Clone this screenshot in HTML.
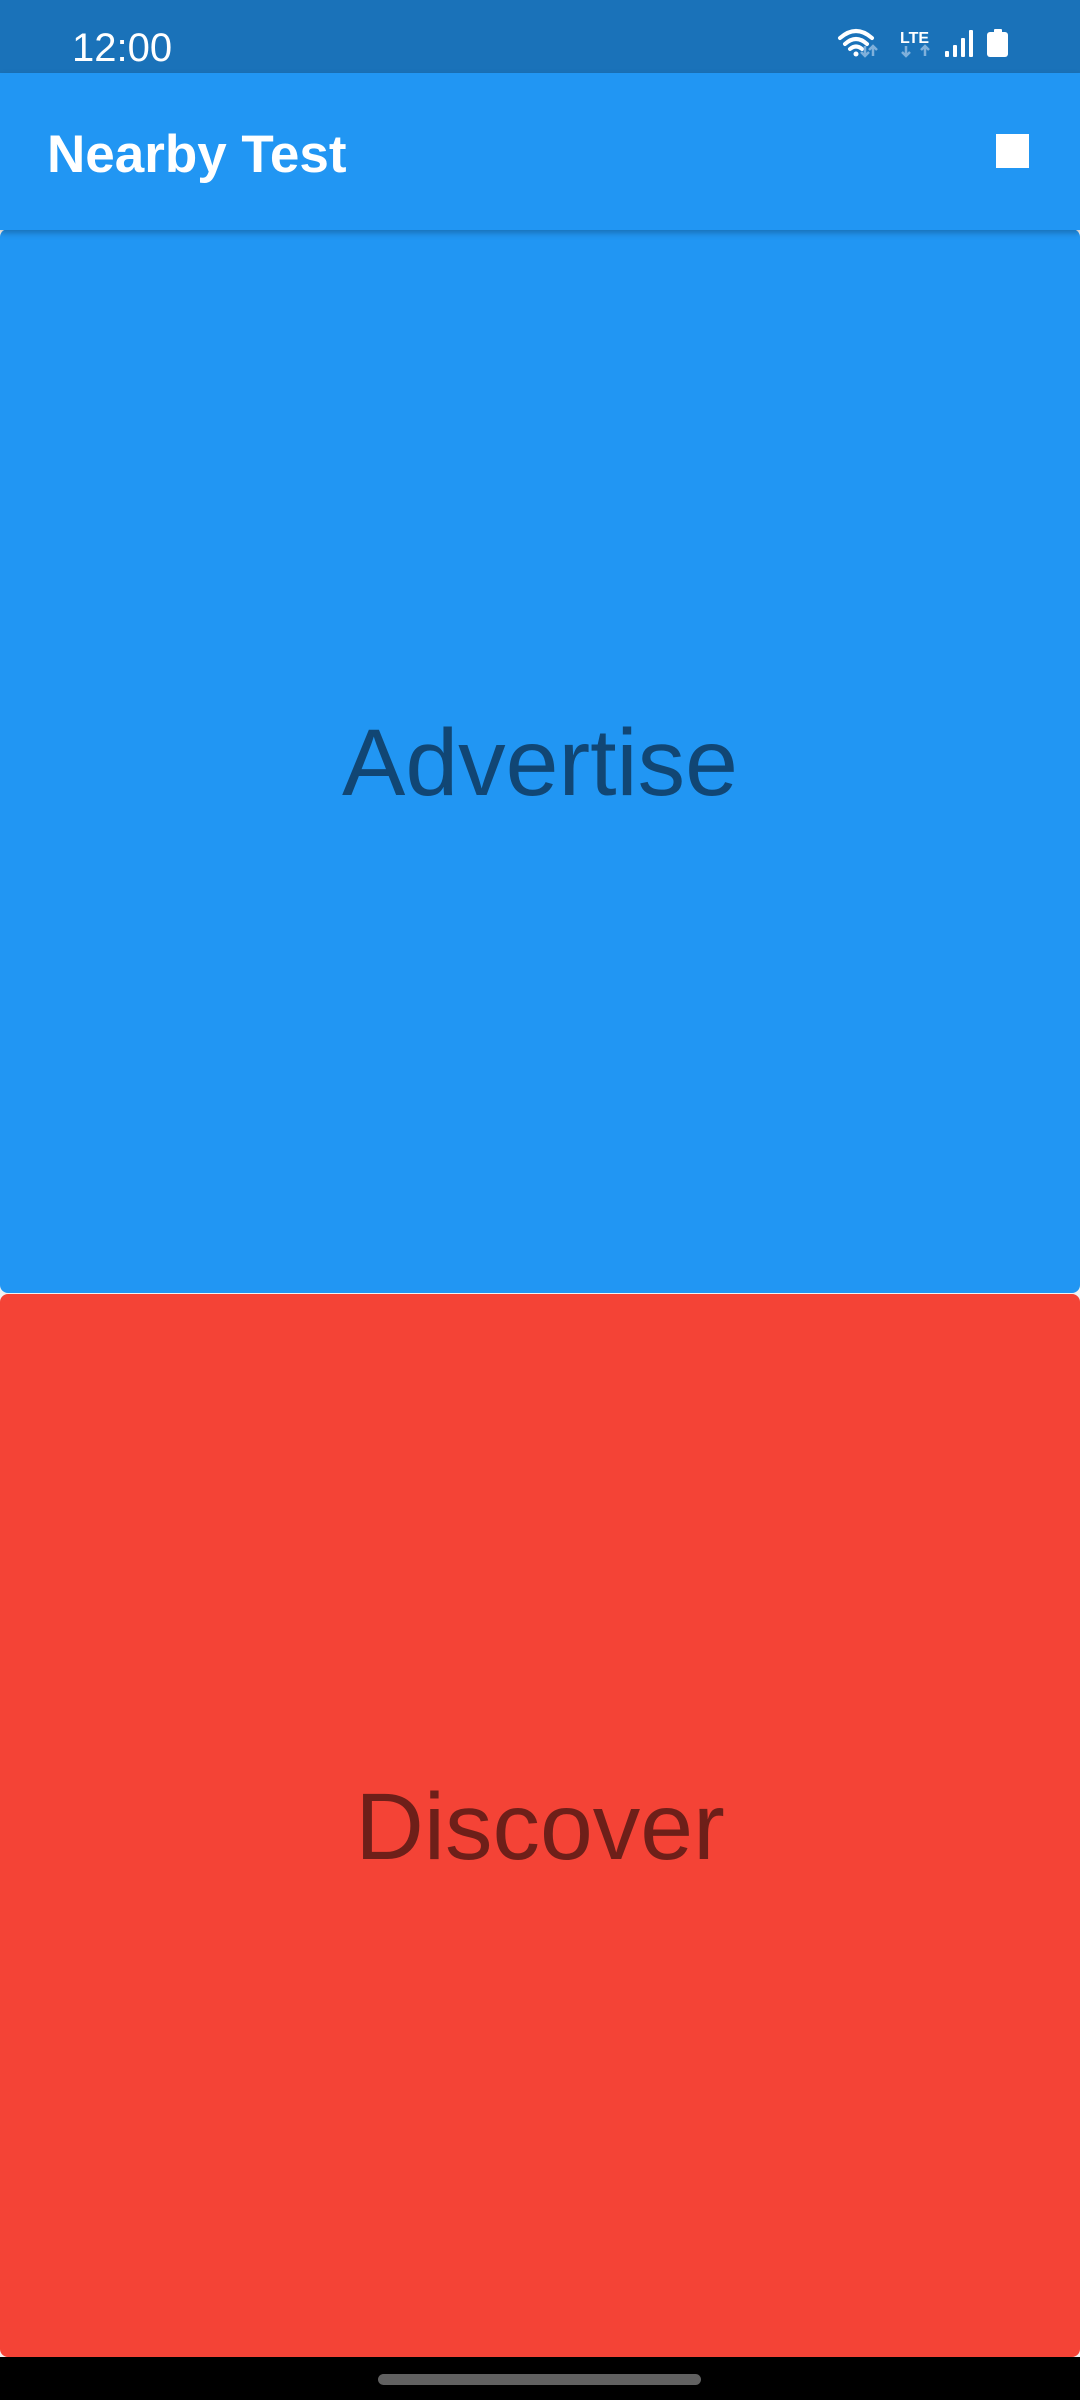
<!DOCTYPE html>
<html><head><meta charset="utf-8"><style>
html,body{margin:0;padding:0;}
body{width:1080px;height:2400px;position:relative;background:#f2f2f2;overflow:hidden;font-family:"Liberation Sans",sans-serif;}
.abs{position:absolute;}
.t{line-height:1;white-space:nowrap;}
</style></head><body>
<div class="abs" style="left:0;top:0;width:1080px;height:73px;background:#1a72b9;"></div>
<div class="abs t" style="left:72px;top:28px;font-size:40px;color:#fff;">12:00</div>
<svg class="abs" style="left:830px;top:22px" width="190" height="42" viewBox="830 22 190 42">
  <g fill="none" stroke="#fff" stroke-width="4" stroke-linecap="round">
    <path d="M840 38 Q856 24 872 38"/>
    <path d="M845 44 Q856 34 867 44"/>
    <path d="M850 49 Q856 44 862 49"/>
  </g>
  <circle cx="856" cy="54" r="2.5" fill="#fff"/>
  <g fill="none" stroke="#7fb0db" stroke-width="2.5">
    <path d="M865 46 V56 M861 52 L865 56 L869 52"/>
    <path d="M873 56 V46 M869 50 L873 46 L877 50"/>
    <path d="M906 46 V56 M902 52 L906 56 L910 52"/>
    <path d="M925 56 V46 M921 50 L925 46 L929 50"/>
  </g>
  <text x="900" y="43" font-family="Liberation Sans" font-weight="bold" font-size="16" fill="#fff">LTE</text>
  <g fill="#fff">
    <rect x="945" y="51" width="4" height="6" rx="1"/>
    <rect x="953" y="45" width="4" height="12" rx="1"/>
    <rect x="961" y="38" width="4" height="19" rx="1"/>
    <rect x="969" y="30" width="4" height="27" rx="1"/>
    <rect x="994" y="29" width="8" height="4" rx="1"/>
    <rect x="987" y="32" width="21" height="25" rx="3"/>
  </g>
</svg>
<div class="abs" style="left:0;top:73px;width:1080px;height:157px;background:#2196f3;box-shadow:0 3px 6px rgba(0,0,0,0.25);z-index:2;"></div>
<div class="abs t" style="left:47px;top:128px;font-size:53px;font-weight:bold;color:#fff;z-index:3;">Nearby Test</div>
<div class="abs" style="left:996px;top:134px;width:33px;height:34px;background:#fff;z-index:3;"></div>
<div class="abs" style="left:0;top:229px;width:1080px;height:1064px;background:#2196f3;border-radius:8px;"></div>
<div class="abs t" style="left:0;top:716px;width:1080px;text-align:center;font-size:95px;color:#114674;">Advertise</div>
<div class="abs" style="left:0;top:1294px;width:1080px;height:1063px;background:#f44336;border-radius:8px;"></div>
<div class="abs t" style="left:0;top:1780px;width:1080px;text-align:center;font-size:95px;color:#6e1f19;">Discover</div>
<div class="abs" style="left:0;top:2357px;width:1080px;height:43px;background:#000;"></div>
<div class="abs" style="left:378px;top:2374px;width:323px;height:11px;border-radius:6px;background:#616161;"></div>
</body></html>
